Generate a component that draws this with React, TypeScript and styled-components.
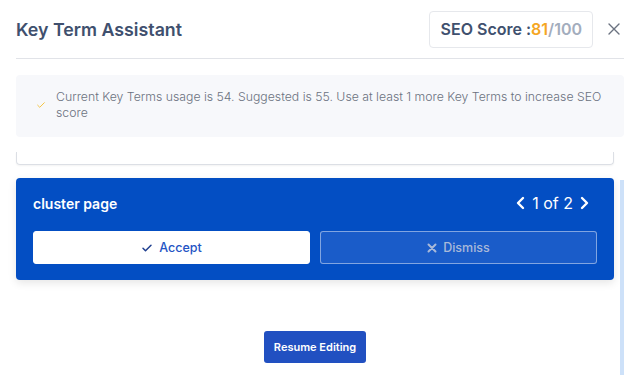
import React from "react";
import styled, { createGlobalStyle } from "styled-components";

const Global = createGlobalStyle`
  html, body { margin: 0; padding: 0; background: #fff; }
  body { font-family: Inter, "Noto Sans", sans-serif; overflow: hidden; }
  * { box-sizing: border-box; }
`;

const Page = styled.div`
  width: 637px;
  height: 375px;
  padding: 0 13px 0 16px;
  display: flex;
  flex-direction: column;
  overflow: hidden;
`;

const Header = styled.div`
  height: 59px;
  display: flex;
  align-items: center;
  border-bottom: 1px solid #e1e3e8;
  flex-shrink: 0;
`;

const Title = styled.h1`
  margin: 0;
  font-size: 17.8px;
  font-weight: 600;
  color: #40506e;
  flex: 1;
`;

const ScoreBox = styled.div`
  height: 37px;
  padding: 0 10px 0 11px;
  border: 1px solid #e6e8ec;
  border-radius: 4px;
  display: flex;
  align-items: center;
  font-size: 16px;
  font-weight: 600;
  color: #40506e;
`;

const Score = styled.span<{ $tone: "orange" | "gray" }>`
  color: ${(p) => (p.$tone === "orange" ? "#f5a623" : "#a3adbd")};
`;

const CloseButton = styled.button`
  width: 20px;
  height: 20px;
  margin-left: 11px;
  padding: 0;
  border: none;
  background: none;
  display: flex;
  align-items: center;
  justify-content: center;
  color: #6b7280;
`;

const Alert = styled.div`
  margin-top: 16px;
  background: #f7f8fb;
  border-radius: 4px;
  padding: 14px 18px 16px 20px;
  display: flex;
  align-items: center;
  gap: 10px;
  flex-shrink: 0;
`;

const AlertText = styled.p`
  margin: 0;
  font-size: 12.25px;
  font-weight: 300;
  line-height: 16px;
  color: #6b7280;
`;

const Body = styled.div`
  margin-top: 15px;
  flex: 1;
  display: flex;
  gap: 6px;
  min-height: 0;
`;

const Scroll = styled.div`
  flex: 1;
  display: flex;
  flex-direction: column;
  align-items: stretch;
`;

const ClippedCard = styled.div`
  height: 13px;
  border: 1px solid #dcdfe5;
  border-top: none;
  border-radius: 0 0 4px 4px;
  box-shadow: 0 1px 2px rgba(0, 0, 0, 0.05);
`;

const SuggestionCard = styled.div`
  margin-top: 13px;
  background: #034ec3;
  border-radius: 4px;
  padding: 15px 17px 16px;
  box-shadow: 0 3px 8px rgba(0, 0, 0, 0.1);
`;

const CardTop = styled.div`
  height: 20px;
  display: flex;
  align-items: center;
  justify-content: space-between;
  margin-bottom: 18px;
`;

const Term = styled.span`
  color: #fff;
  font-size: 14px;
  font-weight: 600;
`;

const Pager = styled.div`
  display: flex;
  align-items: center;
  gap: 5px;
  margin-right: 7px;
  color: #fff;
  font-size: 16px;
  font-weight: 400;
`;

const Actions = styled.div`
  display: grid;
  grid-template-columns: 1fr 1fr;
  gap: 10px;
`;

const ActionButton = styled.button<{ $variant: "accept" | "dismiss" }>`
  height: 33px;
  border-radius: 3px;
  display: flex;
  align-items: center;
  justify-content: center;
  gap: 6px;
  font-family: Inter, "Noto Sans", sans-serif;
  font-size: 12.5px;
  font-weight: 500;
  cursor: pointer;
  border: 1px solid
    ${(p) => (p.$variant === "accept" ? "#ffffff" : "rgba(255,255,255,0.45)")};
  background: ${(p) => (p.$variant === "accept" ? "#ffffff" : "#1a5cc9")};
  color: ${(p) => (p.$variant === "accept" ? "#2454c4" : "#a9b9d9")};
`;

const Footer = styled.div`
  display: flex;
  justify-content: center;
  margin-top: 51px;
`;

const ResumeButton = styled.button`
  height: 32px;
  padding: 0 10px;
  border: none;
  border-radius: 3px;
  background: #2150c1;
  color: #fff;
  font-family: Inter, "Noto Sans", sans-serif;
  font-size: 11px;
  font-weight: 600;
`;

const ScrollTrack = styled.div`
  width: 4px;
  display: flex;
  flex-direction: column;
`;

const ScrollThumb = styled.div`
  margin-top: 28px;
  flex: 1;
  background: #cde1f9;
`;

const Check = ({ color, size, width }: { color: string; size: number; width: number }) => (
  <svg width={size} height={size} viewBox="0 0 24 24" fill="none" stroke={color} strokeWidth={width} strokeLinecap="round" strokeLinejoin="round" style={{ flexShrink: 0 }}>
    <path d="M4 12.5l5 5L20 6.5" />
  </svg>
);

const Chevron = ({ dir }: { dir: "left" | "right" }) => (
  <svg width="12" height="14" viewBox="0 0 12 14" fill="none" stroke="#fff" strokeWidth="2.4" strokeLinecap="round" strokeLinejoin="round">
    {dir === "left" ? <path d="M8 2L3 7l5 5" /> : <path d="M4 2l5 5-5 5" />}
  </svg>
);

export default function App() {
  return (
    <>
      <Global />
      <Page>
        <Header>
          <Title>Key Term Assistant</Title>
          <ScoreBox>
            SEO Score :<Score $tone="orange">81</Score>
            <Score $tone="gray">/100</Score>
          </ScoreBox>
          <CloseButton aria-label="Close">
            <svg width="12" height="12" viewBox="0 0 12 12" stroke="#6b7280" strokeWidth="1.4" strokeLinecap="round">
              <path d="M1 1l10 10M11 1L1 11" />
            </svg>
          </CloseButton>
        </Header>
        <Alert>
          <Check color="#f5c542" size={10} width={2.4} />
          <AlertText>
            Current Key Terms usage is 54. Suggested is 55. Use at least 1 more Key Terms to increase SEO score
          </AlertText>
        </Alert>
        <Body>
          <Scroll>
            <ClippedCard />
            <SuggestionCard>
              <CardTop>
                <Term>cluster page</Term>
                <Pager>
                  <Chevron dir="left" />
                  <span>1 of 2</span>
                  <Chevron dir="right" />
                </Pager>
              </CardTop>
              <Actions>
                <ActionButton $variant="accept">
                  <Check color="#1f3f8f" size={12} width={3} />
                  Accept
                </ActionButton>
                <ActionButton $variant="dismiss">
                  <svg width="10" height="10" viewBox="0 0 10 10" stroke="#a9b9d9" strokeWidth="2" strokeLinecap="round">
                    <path d="M1.5 1.5l7 7M8.5 1.5l-7 7" />
                  </svg>
                  Dismiss
                </ActionButton>
              </Actions>
            </SuggestionCard>
            <Footer>
              <ResumeButton>Resume Editing</ResumeButton>
            </Footer>
          </Scroll>
          <ScrollTrack>
            <ScrollThumb />
          </ScrollTrack>
        </Body>
      </Page>
    </>
  );
}
